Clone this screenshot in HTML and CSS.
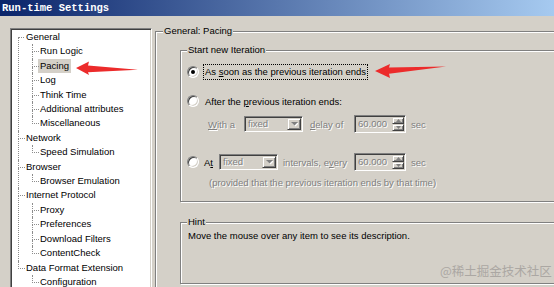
FILE: index.html
```html
<!DOCTYPE html>
<html>
<head>
<meta charset="utf-8">
<title>Run-time Settings</title>
<link rel="stylesheet" href="styles.css">
</head>
<body>
<div class="titlebar">Run-time Settings</div>
<div class="client">
  <div class="tree">
    <ul class="root">
      <li>General
        <ul>
          <li>Run Logic</li>
          <li><span class="sel">Pacing</span></li>
          <li>Log</li>
          <li>Think Time</li>
          <li>Additional attributes</li>
          <li>Miscellaneous</li>
        </ul>
      </li>
      <li>Network
        <ul>
          <li>Speed Simulation</li>
        </ul>
      </li>
      <li>Browser
        <ul>
          <li>Browser Emulation</li>
        </ul>
      </li>
      <li>Internet Protocol
        <ul>
          <li>Proxy</li>
          <li>Preferences</li>
          <li>Download Filters</li>
          <li>ContentCheck</li>
        </ul>
      </li>
      <li>Data Format Extension
        <ul>
          <li>Configuration</li>
        </ul>
      </li>
    </ul>
  </div>
  <fieldset class="gb outer">
    <legend>General: Pacing</legend>
    <fieldset class="gb iter">
      <legend>Start new Iteration</legend>
      <div class="row r1"><span class="radio on"></span><span class="focus">As <u>s</u>oon as the previous iteration ends</span></div>
      <div class="row r2"><span class="radio"></span><span class="lbl">After the <u>p</u>revious iteration ends:</span></div>
      <div class="row r3">
        <span class="dis t1"><u>W</u>ith a</span>
        <span class="combo"><span class="val dis">fixed</span><span class="btn"><svg width="7" height="5" viewBox="0 0 7 5"><polygon points="1,1 8,1 4.5,4.5" fill="#fff"/><polygon points="0,0 7,0 3.5,3.5" fill="#808080"/></svg></span></span>
        <span class="dis t2"><u>d</u>elay of</span>
        <span class="num"><span class="val dis">60.000</span><span class="spin"><span class="btn"><svg width="5" height="3" viewBox="0 0 5 3"><polygon points="2.5,0 5,3 0,3" fill="#808080"/></svg></span><span class="btn"><svg width="5" height="3" viewBox="0 0 5 3"><polygon points="0,0 5,0 2.5,3" fill="#808080"/></svg></span></span></span>
        <span class="dis sec">sec</span>
      </div>
      <div class="row r4">
        <span class="radio"></span>
        <span class="t3">A<u>t</u></span>
        <span class="combo"><span class="val dis">fixed</span><span class="btn"><svg width="7" height="5" viewBox="0 0 7 5"><polygon points="1,1 8,1 4.5,4.5" fill="#fff"/><polygon points="0,0 7,0 3.5,3.5" fill="#808080"/></svg></span></span>
        <span class="dis t4">intervals, e<u>v</u>ery</span>
        <span class="num"><span class="val dis">60.000</span><span class="spin"><span class="btn"><svg width="5" height="3" viewBox="0 0 5 3"><polygon points="2.5,0 5,3 0,3" fill="#808080"/></svg></span><span class="btn"><svg width="5" height="3" viewBox="0 0 5 3"><polygon points="0,0 5,0 2.5,3" fill="#808080"/></svg></span></span></span>
        <span class="dis sec">sec</span>
      </div>
      <div class="row r5"><span class="dis">(provided that the previous iteration ends by that time)</span></div>
    </fieldset>
    <fieldset class="gb hint">
      <legend>Hint</legend>
      <div class="hint-text">Move the mouse over any item to see its description.</div>
    </fieldset>
  </fieldset>
</div>
<div class="wm">@稀土掘金技术社区</div>
<svg class="arrows" width="554" height="287" viewBox="0 0 554 287">
  <polygon points="76,68 89,61.5 88,65.5 138,69.8 88,72.3 89,75" fill="#ec2b2b"/>
  <polygon points="375,71 390,64 389,67.5 446,66.6 389,73.8 390,78" fill="#ec2b2b"/>
</svg>
</body>
</html>
```
FILE: styles.css
```css
* { box-sizing: border-box; }
html, body { margin: 0; padding: 0; }
body {
  width: 554px;
  height: 287px;
  overflow: hidden;
  position: relative;
  background: #d4d0c8;
  color: #000;
  font: 9.5px "Liberation Sans", Arial, sans-serif;
}
.titlebar {
  height: 16px;
  padding-left: 2px;
  background: linear-gradient(90deg, #0a246a, #a6caf0);
  color: #fff;
  font: bold 10.5px "Liberation Mono", monospace;
  line-height: 16px;
  white-space: nowrap;
}
.client { display: flex; align-items: flex-start; height: 271px; overflow: hidden; }

/* tree */
.tree {
  flex: none;
  margin: 12px 0 0 10px;
  width: 142px;
  height: 264px;
  padding: 1px 0 0 7px;
  overflow: hidden;
  background: #fff;
  border: 1px solid;
  border-color: #808080 #fff #fff #808080;
  box-shadow: inset 1px 1px #404040, inset -1px -1px #d4d0c8;
}
.tree ul { list-style: none; margin: 0; padding: 0; }
.tree li {
  position: relative;
  padding-left: 8px;
  line-height: 14.4px;
  white-space: nowrap;
}
.tree li::before {
  content: "";
  position: absolute;
  left: 0; top: 0;
  width: 6px; height: 7px;
  border-left: 1px dotted #8c8c8c;
  border-bottom: 1px dotted #8c8c8c;
}
.tree li::after {
  content: "";
  position: absolute;
  left: 0; top: 8px; bottom: 0;
  border-left: 1px dotted #8c8c8c;
}
.tree li:last-child::after { display: none; }
.root > li:first-child::before { border-left: none; }
.tree li ul { margin-left: 6px; }
.sel {
  display: inline-block;
  margin-left: -2px;
  padding: 0 2px;
  line-height: 14px;
  background: #d4d0c8;
}

/* group boxes */
.gb {
  margin: 0;
  min-width: 0;
  border: 1px solid #808080;
  box-shadow: inset 1px 1px 0 #fff, 1px 1px 0 #fff;
}
.gb > legend {
  padding: 0 1px;
  line-height: 12px;
  background: #d4d0c8;
}
.outer {
  flex: none;
  margin: 9px 0 0 3px;
  width: 420px;
  height: 268px;
  padding: 0 0 0 24px;
}
.outer > legend { margin-left: -17px; }
.iter {
  margin-top: 7px;
  width: 400px;
  padding: 0 0 12px 6px;
}
.hint {
  margin-top: 14px;
  width: 400px;
  height: 68px;
  padding: 1px 0 0 6px;
}
.hint-text { margin-left: 1px; line-height: 14px; }

/* rows */
.row { display: flex; align-items: center; white-space: nowrap; }
.r1 { margin-top: 8px; height: 16px; }
.r2 { margin-top: 13px; height: 16px; }
.r3 { margin-top: 6px; height: 18px; padding-left: 21px; }
.r4 { margin-top: 20px; height: 18px; }
.r5 { margin-top: 4px; height: 14px; padding-left: 22px; }

.dis { color: #808080; text-shadow: 1px 1px 0 #fff; }

.radio {
  flex: none;
  position: relative;
  width: 12px; height: 12px;
  border-radius: 50%;
  background: #fff;
  border: 1px solid;
  border-color: #808080 #fff #fff #808080;
  box-shadow: inset 1px 1px #404040, inset -1px -1px #d4d0c8;
}
.radio.on::after {
  content: "";
  position: absolute;
  left: 3px; top: 3px;
  width: 4px; height: 4px;
  border-radius: 50%;
  background: #000;
}
.focus {
  margin-left: 4px;
  padding: 0 1px;
  line-height: 14px;
  border: 1px dotted #000;
}
.lbl { margin-left: 6px; }

.t1 { width: 36px; flex: none; }
.t2 { width: 44px; margin-left: 7px; flex: none; }
.t3 { width: 15px; margin-left: 5px; flex: none; }
.t4 { width: 71px; margin-left: 5px; flex: none; }
.sec { margin-left: 5px; }

.combo, .num {
  flex: none;
  display: flex;
  padding: 1px;
  background: #d4d0c8;
  border: 1px solid;
  border-color: #808080 #fff #fff #808080;
  box-shadow: inset 1px 1px #404040, inset -1px -1px #d4d0c8;
}
.combo { width: 59px; height: 16px; }
.num { width: 52px; height: 18px; }
.combo .val { flex: 1; padding-left: 2px; line-height: 12px; }
.num .val { flex: 1; padding-left: 2px; line-height: 14px; }
.btn {
  display: flex;
  align-items: center;
  justify-content: center;
  width: 14px; height: 12px;
  background: #d4d0c8;
  border: 1px solid;
  border-color: #d4d0c8 #404040 #404040 #d4d0c8;
  box-shadow: inset 1px 1px #fff, inset -1px -1px #808080;
}
.btn svg { display: block; }
.spin { display: flex; flex-direction: column; width: 12px; }
.spin .btn { width: 12px; height: 7px; }

.wm {
  position: absolute;
  left: 440px; top: 262px;
  font: 12.5px "Noto Sans CJK SC", sans-serif;
  line-height: 18px;
  color: #aba7a3;
  white-space: nowrap;
}
.arrows { position: absolute; left: 0; top: 0; pointer-events: none; }
```
